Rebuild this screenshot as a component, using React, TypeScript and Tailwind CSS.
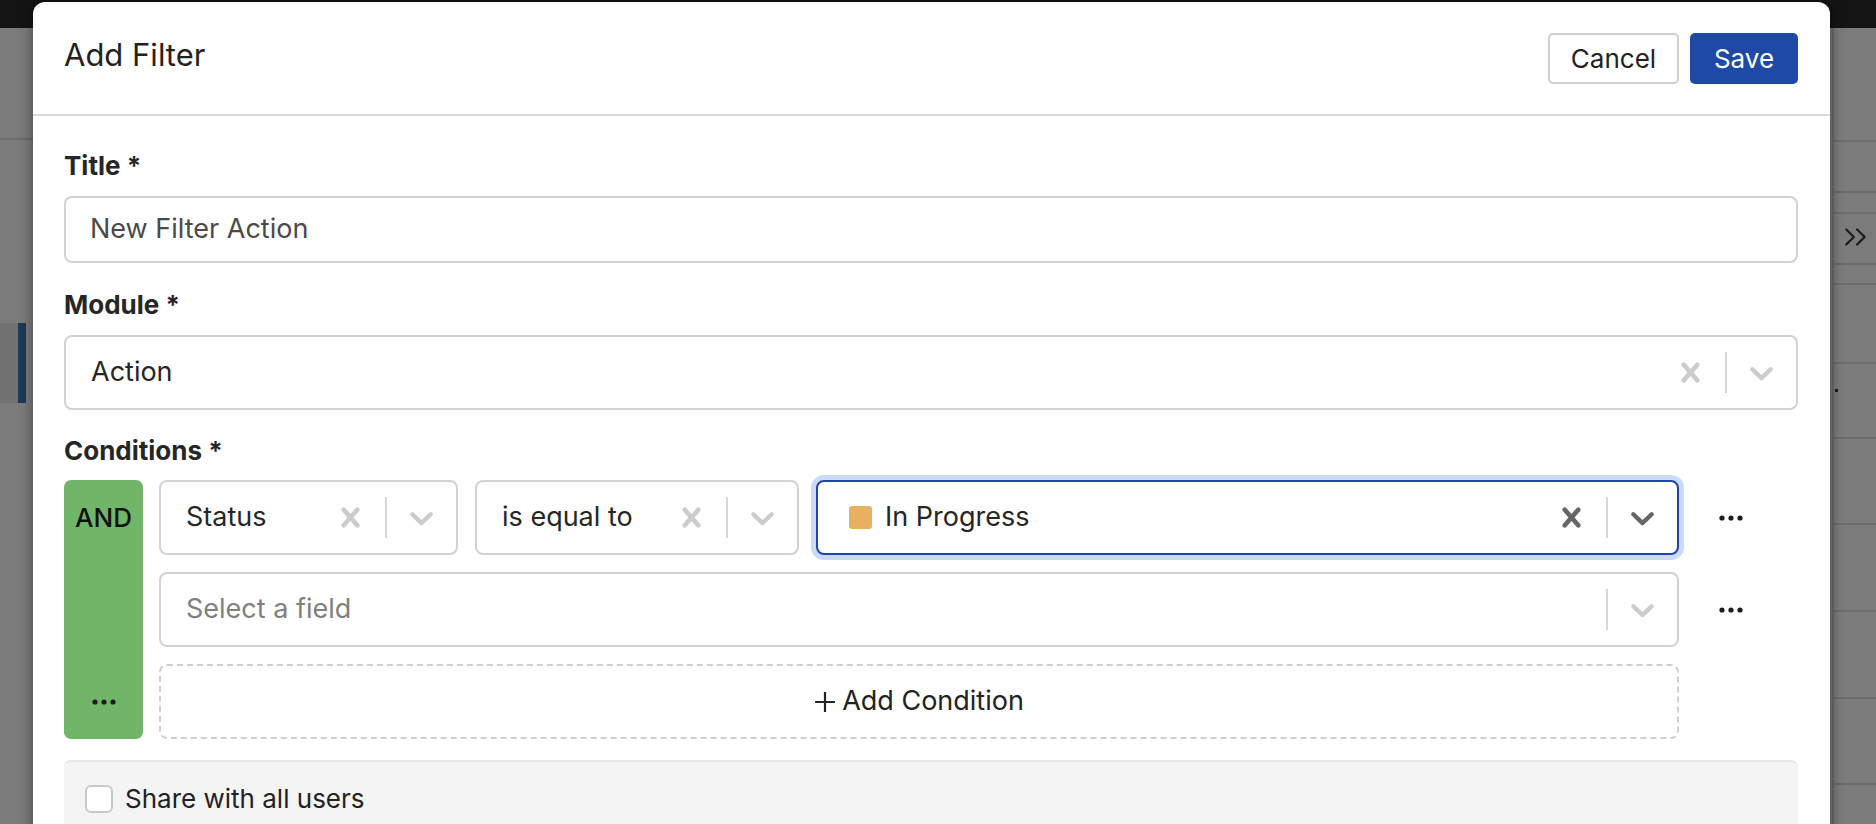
import React from "react";

const Cross = ({ className }: { className?: string }) => (
  <svg viewBox="0 0 20 20" className={className} fill="currentColor">
    <path d="M14.348 14.849c-0.469 0.469-1.229 0.469-1.697 0l-2.651-3.030-2.651 3.029c-0.469 0.469-1.229 0.469-1.697 0-0.469-0.469-0.469-1.229 0-1.697l2.758-3.15-2.759-3.152c-0.469-0.469-0.469-1.228 0-1.697s1.228-0.469 1.697 0l2.652 3.031 2.651-3.031c0.469-0.469 1.228-0.469 1.697 0s0.469 1.229 0 1.697l-2.758 3.152 2.758 3.15c0.469 0.469 0.469 1.229 0 1.698z" />
  </svg>
);

const Chevron = ({ className }: { className?: string }) => (
  <svg viewBox="0 0 20 20" className={className} fill="currentColor">
    <path d="M4.516 7.548c0.436-0.446 1.043-0.481 1.576 0l3.908 3.747 3.908-3.747c0.533-0.481 1.141-0.446 1.574 0 0.436 0.445 0.408 1.197 0 1.615-0.406 0.418-4.695 4.502-4.695 4.502-0.217 0.223-0.502 0.335-0.787 0.335s-0.57-0.112-0.789-0.335c0 0-4.287-4.084-4.695-4.502s-0.436-1.17 0-1.615z" />
  </svg>
);

const Dots = () => (
  <svg viewBox="0 0 24 6" className="h-[6px] w-[24px]" fill="#1c1c1c">
    <circle cx="3" cy="3" r="2.6" />
    <circle cx="12" cy="3" r="2.6" />
    <circle cx="21" cy="3" r="2.6" />
  </svg>
);

type SelectProps = {
  value?: string;
  placeholder?: string;
  clearable?: boolean;
  focused?: boolean;
  swatch?: boolean;
  className?: string;
};

function Select({ value, placeholder, clearable, focused, swatch, className }: SelectProps) {
  const iconColor = focused ? "text-[#666666]" : "text-[#cccccc]";
  return (
    <div
      className={`flex h-[75px] items-center rounded-[8px] border-2 bg-white ${
        focused ? "border-[#1f47a6] shadow-[0_0_0_5px_#cbdaf9]" : "border-[#d2d2d2]"
      } ${className ?? ""}`}
    >
      <div className={`flex min-w-0 flex-1 items-center text-[27px] ${swatch ? "pl-[31px]" : "pl-[25px]"}`}>
        {swatch && <span className="mr-[13px] h-[23px] w-[23px] rounded-[3px] bg-[#e8b05f]" />}
        <span className={value ? "text-[#262626]" : "text-[#808080]"}>{value ?? placeholder}</span>
      </div>
      {clearable && (
        <div className="p-[15px]">
          <Cross className={`h-[39px] w-[39px] ${iconColor}`} />
        </div>
      )}
      <span className="my-[15px] w-[2px] self-stretch bg-[#d6d6d6]" />
      <div className="p-[15px]">
        <Chevron className={`h-[39px] w-[39px] ${iconColor}`} />
      </div>
    </div>
  );
}

export default function App() {
  const rightLines = [140, 191, 212, 263, 283, 362, 437, 523, 610, 697, 783];
  return (
    <div className="relative h-[824px] w-[1876px] overflow-hidden bg-[#7b7b7b] font-['Inter',sans-serif] text-[26px] text-[#262626]">
      {/* backdrop page */}
      <div className="h-[28px] w-full bg-[#141414]" />
      <div className="absolute left-0 top-[138px] h-[2px] w-[40px] bg-[#6c6c6c]" />
      <div className="absolute left-0 top-[323px] h-[80px] w-[18px] bg-[#717171]" />
      <div className="absolute left-[18px] top-[323px] h-[80px] w-[8px] bg-[#1e3a58]" />
      <div className="absolute right-0 top-[28px] h-[796px] w-[44px] border-l-2 border-[#6a6a6a]">
        {rightLines.map((y) => (
          <div key={y} className="absolute left-0 h-[2px] w-full bg-[#6c6c6c]" style={{ top: y - 28 }} />
        ))}
        <svg
          viewBox="0 0 24 24"
          className="absolute left-[9px] top-[196px] h-[26px] w-[26px]"
          fill="none"
          stroke="#1a1a1a"
          strokeWidth="2"
          strokeLinecap="round"
          strokeLinejoin="round"
        >
          <path d="M3 5l7 7-7 7" />
          <path d="M13 5l7 7-7 7" />
        </svg>
        <div className="absolute left-[1px] top-[361px] h-[3px] w-[3px] bg-[#1a1a1a]" />
      </div>

      {/* modal */}
      <div className="absolute left-[33px] top-[2px] h-[900px] w-[1797px] rounded-t-[12px] bg-white shadow-[0_0_14px_rgba(0,0,0,0.45)]">
        <div className="flex h-[114px] items-center justify-between border-b-2 border-[#dadada] pl-[31px] pr-[32px]">
          <h1 className="-mt-[6px] text-[31px] font-normal text-[#222222]">Add Filter</h1>
          <div className="flex items-center gap-[11px]">
            <button className="h-[51px] w-[131px] rounded-[5px] border-2 border-[#cfcfcf] bg-white text-[26px] text-[#222222]">
              Cancel
            </button>
            <button className="h-[51px] w-[108px] rounded-[5px] bg-[#1e4aa6] text-[26px] text-white">Save</button>
          </div>
        </div>

        <div className="px-[31px] pt-[35px] pr-[32px]">
          <div className="mb-[15px] h-[30px] leading-[30px] font-bold">Title *</div>
          <div className="flex h-[67px] items-center rounded-[8px] border-2 border-[#d2d2d2] pl-[24px] text-[27px] text-[#4a4a4a]">
            New Filter Action
          </div>

          <div className="mb-[15px] mt-[27px] h-[30px] leading-[30px] font-bold">Module *</div>
          <Select value="Action" clearable />

          <div className="mb-[14px] mt-[26px] h-[30px] leading-[30px] font-bold">Conditions *</div>
          <div className="flex gap-[16px]">
            <div className="flex w-[79px] flex-col justify-between rounded-[7px] bg-[#71b668]">
              <div className="flex h-[75px] items-center justify-center font-medium text-[#111111]">AND</div>
              <div className="flex h-[75px] items-center justify-center">
                <Dots />
              </div>
            </div>
            <div className="flex flex-1 flex-col gap-[17px]">
              <div className="flex items-center">
                <div className="flex flex-1 gap-[17px]">
                  <Select value="Status" clearable className="w-[299px]" />
                  <Select value="is equal to" clearable className="w-[324px]" />
                  <Select value="In Progress" clearable focused swatch className="flex-1" />
                </div>
                <div className="flex w-[119px] pl-[40px]">
                  <Dots />
                </div>
              </div>
              <div className="flex items-center">
                <Select placeholder="Select a field" className="flex-1" />
                <div className="flex w-[119px] pl-[40px]">
                  <Dots />
                </div>
              </div>
              <div className="flex items-center">
                <div className="flex h-[75px] flex-1 items-center justify-center rounded-[8px] border-2 border-dashed border-[#cfcfcf]">
                  <svg viewBox="0 0 20 20" className="mr-[6px] h-[22px] w-[22px]" stroke="#222" strokeWidth="2" fill="none">
                    <path d="M10 1v18M1 10h18" />
                  </svg>
                  <span className="text-[27px] text-[#222222]">Add Condition</span>
                </div>
                <div className="w-[119px]" />
              </div>
            </div>
          </div>

          <div className="mt-[21px] flex h-[90px] items-start rounded-[7px] border-t-2 border-[#e6e6e6] bg-[#f4f4f4] pl-[21px] pt-[23px]">
            <span className="h-[28px] w-[28px] rounded-[6px] border-2 border-[#c8c8c8] bg-white" />
            <span className="ml-[12px] leading-[28px] text-[#222222]">Share with all users</span>
          </div>
        </div>
      </div>
    </div>
  );
}
